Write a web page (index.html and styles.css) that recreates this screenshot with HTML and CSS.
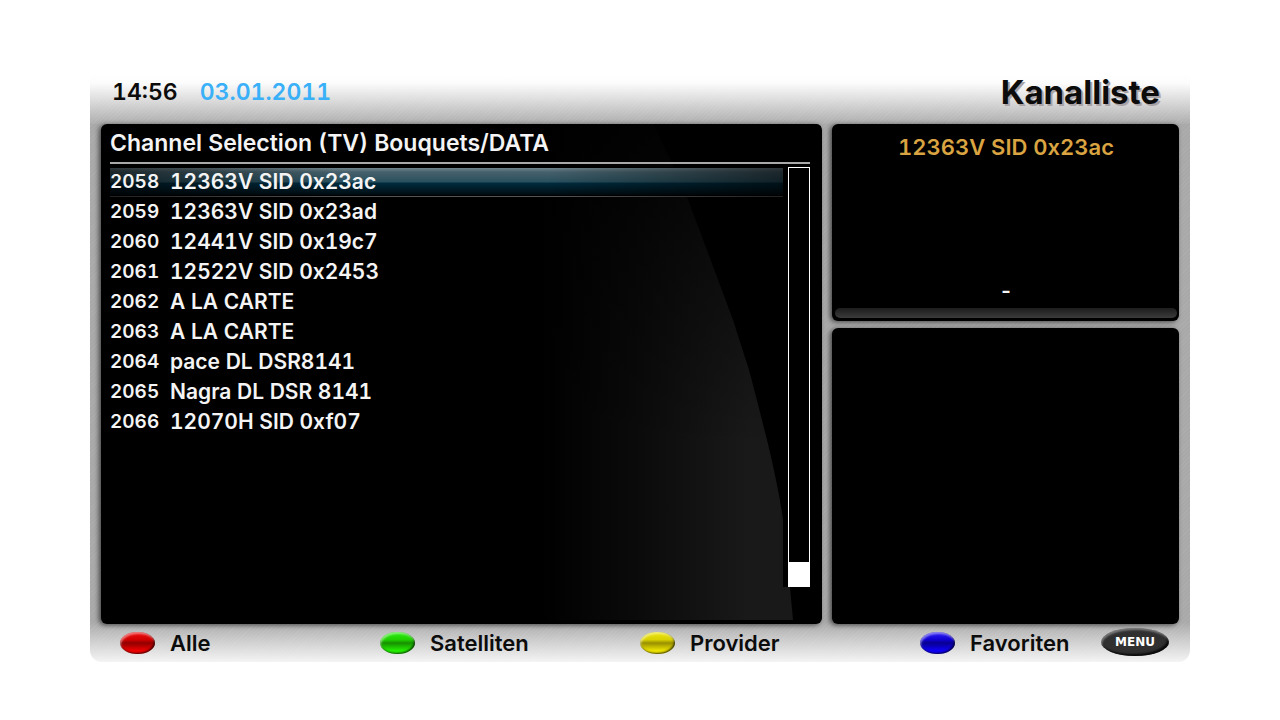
FILE: index.html
```html
<!DOCTYPE html>
<html lang="de">
<head>
<meta charset="utf-8">
<meta name="viewport" content="width=device-width, initial-scale=1">
<title>Kanalliste</title>
<link rel="stylesheet" href="styles.css">
</head>
<body>
<main class="frame">
  <header class="topbar">
    <time class="clock">14:56</time>
    <time class="date" datetime="2011-01-03">03.01.2011</time>
    <h1 class="title">Kanalliste</h1>
  </header>

  <div class="content">
    <section class="panel channels">
      <svg class="beam" viewBox="0 0 721 500" preserveAspectRatio="none" aria-hidden="true">
        <defs>
          <linearGradient id="glow" gradientUnits="userSpaceOnUse" x1="440" y1="0" x2="670" y2="0">
            <stop offset="0" stop-color="#191919" stop-opacity="0"/>
            <stop offset="0.4" stop-color="#191919" stop-opacity="0.4"/>
            <stop offset="0.9" stop-color="#191919"/>
          </linearGradient>
          <linearGradient id="fade" x1="0" y1="0" x2="0" y2="1">
            <stop offset="0" stop-color="#000" stop-opacity="0.85"/>
            <stop offset="0.25" stop-color="#000" stop-opacity="0.45"/>
            <stop offset="0.65" stop-color="#000" stop-opacity="0"/>
          </linearGradient>
        </defs>
        <path fill="url(#glow)" d="M440 496V0H552L572 41L586 73L604 121L632 196L648 246Q656 276 667 320Q680 375 684 410L692 496Z"/>
        <path fill="url(#fade)" d="M440 496V0H720V496Z"/>
      </svg>
      <h2 class="heading">Channel Selection (TV) Bouquets/DATA</h2>
      <div class="list">
        <table class="rows">
          <tbody>
            <tr class="row selected"><td class="num">2058</td><td>12363V SID 0x23ac</td></tr>
            <tr class="row"><td class="num">2059</td><td>12363V SID 0x23ad</td></tr>
            <tr class="row"><td class="num">2060</td><td>12441V SID 0x19c7</td></tr>
            <tr class="row"><td class="num">2061</td><td>12522V SID 0x2453</td></tr>
            <tr class="row"><td class="num">2062</td><td>A LA CARTE</td></tr>
            <tr class="row"><td class="num">2063</td><td>A LA CARTE</td></tr>
            <tr class="row"><td class="num">2064</td><td>pace DL DSR8141</td></tr>
            <tr class="row"><td class="num">2065</td><td>Nagra DL DSR 8141</td></tr>
            <tr class="row"><td class="num">2066</td><td>12070H SID 0xf07</td></tr>
          </tbody>
        </table>
        <div class="scroll"><div class="track"><div class="thumb"></div></div></div>
      </div>
    </section>

    <div class="side">
      <section class="panel now">
        <h2 class="service">12363V SID 0x23ac</h2>
        <p class="dash">-</p>
        <div class="progress"></div>
      </section>
      <section class="panel info"></section>
    </div>
  </div>

  <footer class="keys">
    <button class="key" type="button"><span class="lamp red"></span>Alle</button>
    <button class="key" type="button"><span class="lamp green"></span>Satelliten</button>
    <button class="key" type="button"><span class="lamp yellow"></span>Provider</button>
    <button class="key" type="button"><span class="lamp blue"></span>Favoriten</button>
    <button class="menu" type="button">MENU</button>
  </footer>
</main>
</body>
</html>
```

FILE: styles.css
```css
* { box-sizing: border-box; }

body {
  margin: 0;
  min-height: 100vh;
  padding: 75px 90px 58px;
  display: flex;
  background: #fff;
  color: #f4f4f4;
  font-family: Inter, "Open Sans", sans-serif;
  font-size: 21px;
  font-weight: 600;
  font-variant-numeric: tabular-nums;
}

h1, h2, p { margin: 0; }

.frame {
  flex: 1;
  display: flex;
  flex-direction: column;
  border-radius: 0 0 12px 12px;
  background:
    repeating-linear-gradient(135deg, rgba(255,255,255,.05) 0 1px, transparent 1px 3px),
    linear-gradient(#fff, #fcfcfc 8px, #dedede 24px, #adadad 49px, transparent 49px),
    linear-gradient(to top, #f4f4f4, #d0d0d0 20px, #a9a9a9 40px, transparent 40px),
    #a9a9a9;
}

.topbar {
  display: flex;
  align-items: center;
  height: 49px;
  padding: 0 30px 16px 22px;
  color: #0c0c0c;
}
.clock, .date { font-size: 23px; line-height: 30px; }
.date { margin-left: 22px; color: #39b0f8; }
.title {
  margin-left: auto;
  font-size: 33px;
  line-height: 30px;
  font-weight: 700;
  text-shadow: 2px 2px 0 #aaa3a6;
}

.content {
  flex: 1;
  display: grid;
  grid-template-columns: 721fr 347fr;
  gap: 10px;
  padding: 0 11px;
}

.panel {
  background: #000;
  border-radius: 6px;
  box-shadow: -2px 1px 5px rgba(0,0,0,.6);
}

.channels {
  position: relative;
  display: flex;
  flex-direction: column;
  padding: 0 12px 37px 9px;
  overflow: hidden;
}
.beam { position: absolute; inset: 0; width: 100%; height: 100%; }
.heading {
  position: relative;
  height: 40px;
  border-bottom: 2px solid #a9a9a9;
  font-size: 23px;
  line-height: 38px;
  font-weight: 600;
}
.list {
  position: relative;
  flex: 1;
  display: flex;
  align-items: flex-start;
  margin-top: 3px;
}
.rows { flex: 1; border-collapse: collapse; }
.row { height: 30px; }
.row td { padding: 0; line-height: 30px; }
.row .num { width: 60px; font-size: 19px; }
.selected {
  background:
    linear-gradient(90deg, rgba(0,0,0,.6), transparent 35%, transparent 65%, rgba(0,0,0,.6)),
    linear-gradient(#000 1px, #70848c 1px, #46616c 5px, #29505e 15px, #002c3f 16px, #001c28 22px, #000a0f 28px, #000 28px, #000 29px, #555 29px);
}
.scroll {
  display: flex;
  align-self: stretch;
  width: 27px;
  padding-left: 5px;
  background: #000;
}
.track {
  flex: 1;
  display: flex;
  flex-direction: column;
  justify-content: flex-end;
  border: 1px solid #fff;
}
.thumb { height: 24px; background: #fff; }

.side { display: grid; grid-template-rows: 197fr 296fr; gap: 7px; }
.now {
  display: flex;
  flex-direction: column;
  padding: 8px 2px 3px 3px;
  text-align: center;
}
.service { font-size: 22px; line-height: 30px; font-weight: 600; color: #d9a441; }
.dash { margin-top: auto; line-height: 34px; }
.progress {
  height: 10px;
  border-radius: 5px;
  background: linear-gradient(#1d1d1d, #3b3b3b);
}

.keys {
  display: grid;
  grid-template-columns: 260fr 260fr 280fr 181fr auto;
  align-items: center;
  height: 38px;
  padding: 0 21px 0 30px;
}
.key {
  display: flex;
  align-items: center;
  gap: 15px;
  padding: 0;
  border: 0;
  background: none;
  color: #0c0c0c;
  font: inherit;
  font-size: 22px;
  line-height: 30px;
}
.lamp {
  width: 35px;
  height: 22px;
  border-radius: 50%;
  box-shadow: inset 1px 2px 2px rgba(255,255,255,.45), inset -1px -1px 2px rgba(0,0,0,.7);
}
.red { background: linear-gradient(#f01010, #d00000 35%, #900000 50%, #f00000 85%); }
.green { background: linear-gradient(#2af010, #20d000 35%, #179000 50%, #25f000 85%); }
.yellow { background: linear-gradient(#f0e810, #d8d000 35%, #989000 50%, #f0e600 85%); }
.blue { background: linear-gradient(#3020f8, #1000d0 35%, #080090 50%, #1000f8 85%); }
.menu {
  width: 68px;
  height: 28px;
  margin-bottom: 2px;
  padding: 0;
  border: 0;
  border-radius: 50%;
  background: #303030;
  box-shadow: inset 1px 2px 2px rgba(255,255,255,.35), inset -2px -2px 2px rgba(0,0,0,.8);
  color: #fff;
  font: bold 12px/28px "DejaVu Sans", sans-serif;
}
```
